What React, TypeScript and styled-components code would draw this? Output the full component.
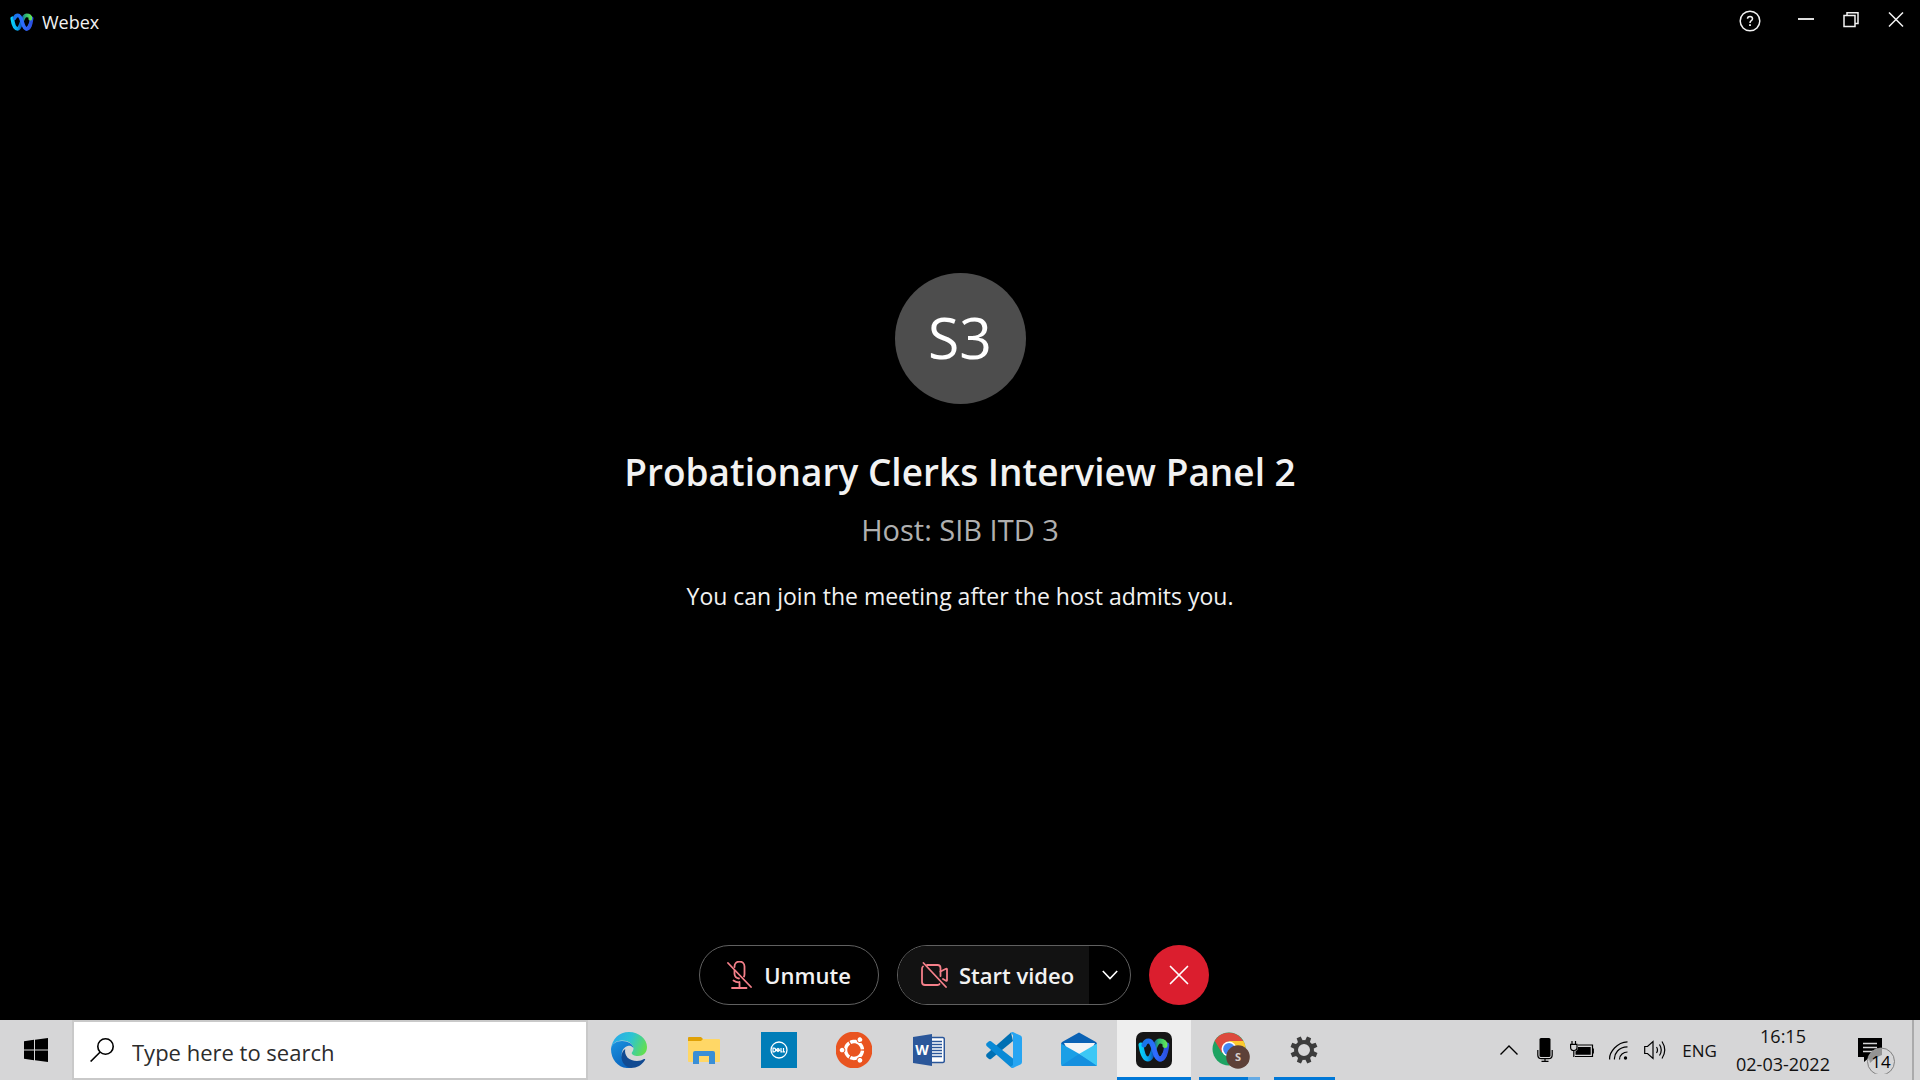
import React from 'react';
import styled, { createGlobalStyle } from 'styled-components';
import { FaUbuntu } from 'react-icons/fa';

const Global = createGlobalStyle`
  * { box-sizing: border-box; }
  body { margin: 0; background: #000; }
  button, input { font: inherit; color: inherit; }
  button { border: 0; padding: 0; background: none; cursor: pointer; }
  svg { display: block; flex: none; }
`;

const Desktop = styled.div`
  min-height: 100vh;
  display: flex;
  flex-direction: column;
  font-family: "Open Sans", "Noto Sans", sans-serif;
  color: #f2f2f2;
`;

const TitleBar = styled.header`
  display: flex;
  justify-content: space-between;
  height: 40px;
  padding: 0 2px 0 10px;
`;

const Brand = styled.div`
  display: flex;
  align-items: center;
  gap: 8px;
  padding-top: 3px;
  font-size: 18px;
  font-weight: 500;
`;

const WindowControls = styled.div`
  display: flex;
  align-items: center;
`;

const WindowButton = styled.button<{ $wide?: boolean }>`
  width: ${(p) => (p.$wide ? 66 : 45)}px;
  height: 40px;
  padding-top: ${(p) => (p.$wide ? 2 : 0)}px;
  display: flex;
  align-items: center;
  justify-content: center;
`;

const Stage = styled.main`
  flex: 1;
  display: flex;
  flex-direction: column;
  align-items: center;
  justify-content: center;
  padding-bottom: 98px;
  text-align: center;
`;

const Avatar = styled.div`
  width: 131px;
  height: 131px;
  padding-bottom: 4px;
  border-radius: 50%;
  background: #4d4d4d;
  color: #fff;
  display: flex;
  align-items: center;
  justify-content: center;
  font-size: 57px;
`;

const Title = styled.h1`
  margin: 40px 0 0;
  font-size: 37px;
  line-height: 56px;
  font-weight: 600;
`;

const Host = styled.p`
  margin: 8px 0 0;
  font-size: 29px;
  line-height: 44px;
  color: #b0b0b0;
`;

const Notice = styled.p`
  margin: 26px 0 0;
  font-size: 23px;
  line-height: 36px;
`;

const Controls = styled.section`
  display: flex;
  justify-content: center;
  gap: 18px;
  padding: 0 12px 15px 0;
`;

const PillButton = styled.button`
  height: 60px;
  width: 180px;
  display: flex;
  align-items: center;
  justify-content: center;
  gap: 12px;
  border: 1px solid #606060;
  border-radius: 30px;
  font-size: 22px;
  font-weight: 600;
`;

const SplitPill = styled.div`
  height: 60px;
  display: flex;
  overflow: hidden;
  border: 1px solid #606060;
  border-radius: 30px;
`;

const VideoButton = styled.button`
  width: 191px;
  padding-left: 8px;
  display: flex;
  align-items: center;
  justify-content: center;
  gap: 11px;
  background: #121212;
  font-size: 22px;
  font-weight: 600;
`;

const MoreButton = styled.button`
  width: 41px;
  display: flex;
  align-items: center;
  justify-content: center;
`;

const LeaveButton = styled.button`
  width: 60px;
  height: 60px;
  border-radius: 50%;
  background: #db1e2e;
  display: flex;
  align-items: center;
  justify-content: center;
`;

const Taskbar = styled.footer`
  height: 60px;
  display: flex;
  background: #d6d6d7;
  color: #111;
`;

const StartButton = styled.button`
  width: 72px;
  display: flex;
  align-items: center;
  justify-content: center;
`;

const Search = styled.label`
  width: 516px;
  display: flex;
  align-items: center;
  gap: 18px;
  padding-left: 16px;
  border: 2px solid #c9c9c9;
  background: #fff;
`;

const SearchInput = styled.input`
  flex: 1;
  min-width: 0;
  border: 0;
  padding: 3px 0 0;
  outline: 0;
  background: none;
  font-size: 22px;
  &::placeholder { color: #2c2c2c; opacity: 1; }
`;

const Apps = styled.nav`
  display: flex;
  gap: 1px;
  padding-left: 4px;
`;

const AppButton = styled.button<{ $active?: boolean }>`
  width: 74px;
  height: 60px;
  padding-top: 3px;
  display: grid;
  grid-template-rows: 1fr 3px;
  justify-items: center;
  align-items: center;
  background: ${(p) => (p.$active ? '#eeeeee' : 'none')};
`;

const Running = styled.span<{ $kind: 'full' | 'single' | 'stack' }>`
  height: 3px;
  width: ${(p) => (p.$kind === 'full' ? 74 : 61)}px;
  background: ${(p) =>
    p.$kind === 'stack' ? 'linear-gradient(90deg, #0078d7 49px, #66abe4 49px)' : '#0078d7'};
`;

const Tray = styled.div`
  margin-left: auto;
  display: flex;
  align-items: center;
`;

const TrayButton = styled.button<{ $width: number }>`
  width: ${(p) => p.$width}px;
  height: 60px;
  display: flex;
  align-items: center;
  justify-content: center;
  font-size: 17px;
`;

const Clock = styled.button`
  width: 118px;
  height: 60px;
  font-size: 18px;
  line-height: 28px;
`;

const ShowDesktop = styled.button`
  width: 8px;
  height: 60px;
  border-left: 2px solid #aaaaab;
`;

function WebexMark({ id, width, height }: { id: string; width: number; height: number }) {
  return (
    <svg width={width} height={height} viewBox="0 0 32 24" fill="none" strokeLinecap="round" strokeWidth="5">
      <defs>
        <linearGradient id={id + 'a'} gradientUnits="userSpaceOnUse" x1="2" y1="0" x2="29" y2="0">
          <stop offset="0" stopColor="#08d4f7" />
          <stop offset="0.28" stopColor="#07a9ef" />
          <stop offset="0.5" stopColor="#0b4fb5" />
          <stop offset="0.68" stopColor="#2bb273" />
          <stop offset="1" stopColor="#67ea55" />
        </linearGradient>
        <linearGradient id={id + 'b'} gradientUnits="userSpaceOnUse" x1="6" y1="0" x2="29" y2="0">
          <stop offset="0" stopColor="#1676e8" />
          <stop offset="0.5" stopColor="#2f6bff" />
          <stop offset="1" stopColor="#2b50e0" />
        </linearGradient>
      </defs>
      <path d="M28.8 7C28 14 26 21 22 21" stroke={`url(#${id}b)`} />
      <path d="M3 7C4 14 6 21 10 21C15.500 21 15.500 3 22 3C25.500 3 27.500 5 27 7.500" stroke={`url(#${id}a)`} />
      <path d="M6 7C7 4 8.500 3 10.500 3C16.500 3 16 21 22 21C24 21 25.500 19 26.500 16.500" stroke={`url(#${id}b)`} />
    </svg>
  );
}

function EdgeIcon() {
  return (
    <svg width="36" height="36" viewBox="0 0 36 36">
      <defs>
        <linearGradient id="edgeTop" x1="0" y1="0.3" x2="1" y2="0.6">
          <stop offset="0" stopColor="#2aa9ea" />
          <stop offset="0.5" stopColor="#2cc4d3" />
          <stop offset="1" stopColor="#63df4e" />
        </linearGradient>
        <linearGradient id="edgeLeft" x1="0" y1="0" x2="0.6" y2="1">
          <stop offset="0" stopColor="#1a93e0" />
          <stop offset="1" stopColor="#0a63bd" />
        </linearGradient>
      </defs>
      <path d="M0 17C1 7 8 0 18 0C28 0 36 7 36 15C36 21 32 24 27 24C23 24 20.500 22.500 20.700 21C21 20 22.500 19 22.500 16.500C22.500 12 17 8.500 11 8.500C5 8.500 1 12 0 17Z" fill="url(#edgeTop)" />
      <path d="M0 17C.5 12 5 9 11 9C17 9 22 12 22.500 16C21 14 19 13.500 17.500 13.700C12 15 10 20 11 25C12 30 16 35 21 35.700C9 38 0 29 0 17Z" fill="url(#edgeLeft)" />
      <path d="M14.200 17C13 24 18 29 26 29C29 29 31 28 33 27C34 26.700 34.500 27.300 34 28C31 33 26 36 20 36C14 35 10.500 30 10.500 25C10.500 21 12 18.500 14.200 17Z" fill="#114a91" />
    </svg>
  );
}

function FolderIcon() {
  return (
    <svg width="32" height="36" viewBox="0 0 32 36">
      <path d="M0 6Q0 5 1 5H13L15 7V11H0Z" fill="#e0a106" />
      <path d="M0 9H13L15 7H31Q32 7 32 8V29Q32 30 31 30H1Q0 30 0 29Z" fill="#ffd766" />
      <path d="M5 32V21Q5 19 7 19H25Q27 19 27 21V32H21V24H11V32Z" fill="#3a8fd6" />
    </svg>
  );
}

function DellIcon() {
  return (
    <svg width="36" height="36" viewBox="0 0 36 36">
      <path d="M0 0H36V36H0Z" fill="#007db8" />
      <circle cx="18" cy="18" r="8" fill="none" stroke="#fff" strokeWidth="1.3" />
      <path d="M12 16.200V19.800H13.200Q14.600 19.800 14.600 18Q14.600 16.200 13.200 16.200ZM15 18L17 16.400L18.200 17.200M15 18L17 19.600L19 18M16 18.800L18.500 17M20 16V19.800H21.500M22.500 16V19.800H24" fill="none" stroke="#fff" strokeWidth="1.200" />
    </svg>
  );
}

function UbuntuIcon() {
  return (
    <svg width="36" height="36" viewBox="0 0 36 36">
      <circle cx="18" cy="18" r="16" fill="#fff" />
      <FaUbuntu x="-1" y="-1" size={38} color="#e95420" />
    </svg>
  );
}

const WordLetter = styled.text`
  font: 700 14px "Open Sans", sans-serif;
  fill: #fff;
`;

const BadgeLetter = styled.text`
  font: 700 11px "Open Sans", sans-serif;
  fill: #d8cfcb;
`;

const CountText = styled.text`
  font: 400 17px "Open Sans", sans-serif;
  fill: #000;
`;

function WordIcon() {
  return (
    <svg width="32" height="36" viewBox="0 0 32 36">
      <rect x="16" y="5.500" width="15.300" height="25" rx="1.500" fill="#fff" stroke="#2b579a" strokeWidth="1.500" />
      <path d="M19 9.500H29M19 12.500H29M19 15.500H29M19 18.500H29M19 21.500H29M19 24.500H29" stroke="#2b579a" strokeWidth="1.400" />
      <path d="M0 5L19 2V34L0 31Z" fill="#2b579a" />
      <WordLetter x="9" y="23" textAnchor="middle">W</WordLetter>
    </svg>
  );
}

function CodeIcon() {
  return (
    <svg width="36" height="36" viewBox="0 0 36 36">
      <path d="M.6 22L25 .5L27 9L5 27Q4 27.500 3 27L.6 25Q-.3 23.500 .6 22Z" fill="#0070b3" />
      <path d="M.6 14Q-.3 12.500 .6 11.300L3 9.300Q4 8.700 5 9.300L27 26.500V35.500Q25.500 36 24 34.500Z" fill="#0a8ad6" />
      <path d="M27 0L34.500 3.600Q36 4.400 36 6V30Q36 31.600 34.500 32.400L27 36Q25.500 36 24.500 35L27 33V3L24.500 1Q25.500 0 27 0Z" fill="#27a5f2" />
    </svg>
  );
}

function MailIcon() {
  return (
    <svg width="36" height="36" viewBox="0 0 36 36">
      <path d="M0 12Q0 10.500 1.500 9.800L18 .5L34.500 9.800Q36 10.500 36 12V18H0Z" fill="#0a62b5" />
      <path d="M3 11H34L30 19L18 24L7 19Z" fill="#f2f4f6" />
      <path d="M0 11.500L36 32Q36 34 34 34H2Q0 34 0 32Z" fill="#1a9fe6" />
      <path d="M36 11.500L18 22L36 34Z" fill="#3dc8f5" />
      <path d="M0 34L18 22L36 34Z" fill="#1590df" />
    </svg>
  );
}

function WebexAppIcon() {
  return (
    <svg width="36" height="36" viewBox="0 0 36 36">
      <rect width="36" height="36" rx="7" fill="#161616" />
      <g transform="translate(2 6)">
        <WebexMark id="task" width={32} height={24} />
      </g>
    </svg>
  );
}

function ChromeIcon() {
  return (
    <svg width="42" height="38" viewBox="-4 -1 42 38">
      <circle cx="17" cy="17" r="16.500" fill="#1ea362" />
      <path d="M17 9H31.500A16.500 16.500 0 0 1 17 33.500L24 21Z" fill="#fdc92e" />
      <path d="M2.700 8.800A16.500 16.500 0 0 1 31.300 9H17L10 21Z" fill="#dd4b3e" />
      <circle cx="17" cy="17" r="7.500" fill="#fff" />
      <circle cx="17" cy="17" r="5.900" fill="#4285f4" />
      <circle cx="26" cy="25" r="11.8" fill="#5d4038" />
      <BadgeLetter x="26" y="29" textAnchor="middle">S</BadgeLetter>
    </svg>
  );
}

function GearIcon() {
  return (
    <svg width="28" height="28" viewBox="-14 -14 28 28">
      <circle r="8" fill="none" stroke="#3c3c3c" strokeWidth="4" />
      {[22, 67, 112, 157, 202, 247, 292, 337].map((a) => (
        <path key={a} d="M-2.600 -8.500L-2.200 -13.600H2.200L2.600 -8.500Z" transform={`rotate(${a})`} fill="#3c3c3c" />
      ))}
    </svg>
  );
}

const apps: { name: string; icon: React.ReactNode; state?: 'full' | 'single' | 'stack' }[] = [
  { name: 'Microsoft Edge', icon: <EdgeIcon /> },
  { name: 'File Explorer', icon: <FolderIcon /> },
  { name: 'Dell', icon: <DellIcon /> },
  { name: 'Ubuntu', icon: <UbuntuIcon /> },
  { name: 'Word', icon: <WordIcon /> },
  { name: 'Visual Studio Code', icon: <CodeIcon /> },
  { name: 'Mail', icon: <MailIcon /> },
  { name: 'Webex', icon: <WebexAppIcon />, state: 'full' },
  { name: 'Google Chrome', icon: <ChromeIcon />, state: 'stack' },
  { name: 'Settings', icon: <GearIcon />, state: 'single' },
];

export default function App() {
  return (
    <Desktop>
      <Global />
      <TitleBar>
        <Brand>
          <WebexMark id="brand" width={24} height={18} />
          Webex
        </Brand>
        <WindowControls>
          <WindowButton $wide aria-label="Help">
            <svg width="22" height="22" viewBox="0 0 22 22" fill="none" stroke="#f2f2f2" strokeWidth="1.500">
              <circle cx="11" cy="11" r="9.800" />
              <path d="M8.500 8.800Q8.500 6.500 11 6.500T13.500 8.800Q13.500 10 12 10.800Q11 11.500 11 13" />
              <path d="M11 14.300V16" strokeWidth="1.800" />
            </svg>
          </WindowButton>
          <WindowButton aria-label="Minimize">
            <svg width="16" height="16" viewBox="0 0 16 16">
              <path d="M0 7H16" stroke="#ddd" strokeWidth="2" />
            </svg>
          </WindowButton>
          <WindowButton aria-label="Restore">
            <svg width="16" height="16" viewBox="0 0 16 16" fill="none" stroke="#f2f2f2" strokeWidth="1.500">
              <path d="M1 3.500H12V14.500H1ZM4 3.500V.8H15V11.500H12" />
            </svg>
          </WindowButton>
          <WindowButton aria-label="Close">
            <svg width="16" height="16" viewBox="0 0 16 16" stroke="#f2f2f2" strokeWidth="1.500">
              <path d="M1 .5L15 14.500M15 .5L1 14.500" />
            </svg>
          </WindowButton>
        </WindowControls>
      </TitleBar>

      <Stage>
        <Avatar>S3</Avatar>
        <Title>Probationary Clerks Interview Panel 2</Title>
        <Host>Host: SIB ITD 3</Host>
        <Notice>You can join the meeting after the host admits you.</Notice>
      </Stage>

      <Controls aria-label="Call controls">
        <PillButton>
          <svg width="25" height="28" viewBox="0 0 25 28" fill="none" stroke="#f5808a" strokeWidth="1.800" strokeLinecap="round">
            <path d="M7.500 6V5.500A5 5 0 0 1 17.500 5.500V13Q17.500 14.500 17 15.500M7.500 9.500V13A5 5 0 0 0 12 17.500" />
            <path d="M6.500 19.500Q9 21.500 12.500 21.300M12.500 21V26.500M5 27H19.500M1 2L24 26" />
          </svg>
          Unmute
        </PillButton>
        <SplitPill>
          <VideoButton>
            <svg width="27" height="26" viewBox="0 0 27 26" fill="none" stroke="#f5808a" strokeWidth="1.800" strokeLinecap="round">
              <path d="M6 3H16.500Q19.500 3 19.500 6V14M2 4.500Q1 5 1 7V20Q1 23 4 23H16.500Q18 23 18.500 22" />
              <path d="M19.500 9.500L25 6.800Q26 6.500 26 7.500V18Q26 19.200 25 18.700L22 17M2.500 1L25 25" />
            </svg>
            Start video
          </VideoButton>
          <MoreButton aria-label="Video options">
            <svg width="16" height="10" viewBox="0 0 16 10" fill="none" stroke="#fff" strokeWidth="1.600">
              <path d="M.8 1L8 8.500L15.200 1" />
            </svg>
          </MoreButton>
        </SplitPill>
        <LeaveButton aria-label="Leave meeting">
          <svg width="20" height="20" viewBox="0 0 20 20" stroke="#fff" strokeWidth="1.700" strokeLinecap="round">
            <path d="M1.500 1.500L18.500 18.500M18.500 1.500L1.500 18.500" />
          </svg>
        </LeaveButton>
      </Controls>

      <Taskbar>
        <StartButton aria-label="Start">
          <svg width="24" height="24" viewBox="0 0 24 24" fill="#000">
            <path d="M0 3.300L10 1.800V11.500H0ZM11 1.700L24 0V11.500H11ZM0 12.500H10V22.200L0 20.700ZM11 12.500H24V24L11 22.300Z" />
          </svg>
        </StartButton>
        <Search>
          <svg width="24" height="24" viewBox="0 0 24 24" fill="none" stroke="#000" strokeWidth="1.600">
            <circle cx="15.500" cy="8.500" r="7.700" />
            <path d="M10.200 14L.6 23.500" />
          </svg>
          <SearchInput aria-label="Search" placeholder="Type here to search" />
        </Search>
        <Apps aria-label="Pinned apps">
          {apps.map((app) => (
            <AppButton key={app.name} aria-label={app.name} $active={app.state === 'full'}>
              {app.icon}
              {app.state && <Running $kind={app.state} />}
            </AppButton>
          ))}
        </Apps>
        <Tray>
          <TrayButton $width={36} aria-label="Show hidden icons">
            <svg width="18" height="10" viewBox="0 0 18 10" fill="none" stroke="#000" strokeWidth="1.400">
              <path d="M.5 9.500L9 1L17.500 9.500" />
            </svg>
          </TrayButton>
          <TrayButton $width={36} aria-label="Microphone in use">
            <svg width="16" height="24" viewBox="0 0 16 24" fill="none" stroke="#000" strokeWidth="1.200">
              <rect x="2.500" y="0" width="11" height="19" rx="1.500" fill="#000" stroke="none" />
              <path d="M.8 12V17Q.8 20.700 4.500 20.700H11.500Q15.200 20.700 15.200 17V12M8 20.500V23.300M4.500 23.300H11.500" />
            </svg>
          </TrayButton>
          <TrayButton $width={38} aria-label="Battery charging">
            <svg width="24" height="18" viewBox="0 0 24 18" fill="none" stroke="#000" strokeWidth="1.200">
              <path d="M8 4H22.500V15.500H5" />
              <path d="M8 6H20.700V13.700H5.500V10.500Q8 9 8 6Z" fill="#000" stroke="none" />
              <path d="M23.300 7.500V12.500M2 0V3M5.500 0V3M.6 3.300H7V6.500Q7 9.500 3.800 9.500Q.6 9.500 .6 6.500ZM3.800 9.500V16" />
            </svg>
          </TrayButton>
          <TrayButton $width={34} aria-label="Wi-Fi">
            <svg width="19" height="19" viewBox="0 0 19 19" fill="none" stroke="#000" strokeWidth="1.200">
              <path d="M.7 18.500Q0 13 5.500 7T18.500 .8M5.500 18.500Q5 14 8.500 10T18.500 5.800M10.500 18.500Q10.500 15 13 13T18.500 11" />
              <circle cx="16.500" cy="17" r="1.700" fill="#000" stroke="none" />
            </svg>
          </TrayButton>
          <TrayButton $width={40} aria-label="Volume">
            <svg width="22" height="20" viewBox="0 0 22 20" fill="none" stroke="#000" strokeWidth="1.200">
              <path d="M.7 6.500H3.500L9 1.500V18.500L3.500 13.500H.7ZM12.500 7Q14.500 10 12.500 13M15.500 4.500Q19 10 15.500 15.500M18 1.500Q23.500 10 18 18.500" />
            </svg>
          </TrayButton>
          <TrayButton $width={49} aria-label="Input language">ENG</TrayButton>
          <Clock>
            16:15
            <br />
            02-03-2022
          </Clock>
          <TrayButton $width={70} aria-label="Notifications, 14 new">
            <svg width="38" height="48" viewBox="0 -10 38 48">
              <path d="M0 2H24V21H12L6 26V21H0Z" fill="#000" />
              <path d="M5 7.500H19M5 11.500H19M5 15.500H19" stroke="#d6d6d7" strokeWidth="1.300" />
              <circle cx="23" cy="25.500" r="13.500" fill="#d6d6d7" stroke="#808080" />
              <path d="M10.500 21A13 13 0 0 1 23 12.500H24V19Q18 21 12 27Z" fill="#949494" />
              <CountText x="23" y="31.500" textAnchor="middle">14</CountText>
            </svg>
          </TrayButton>
          <ShowDesktop aria-label="Show desktop" />
        </Tray>
      </Taskbar>
    </Desktop>
  );
}
